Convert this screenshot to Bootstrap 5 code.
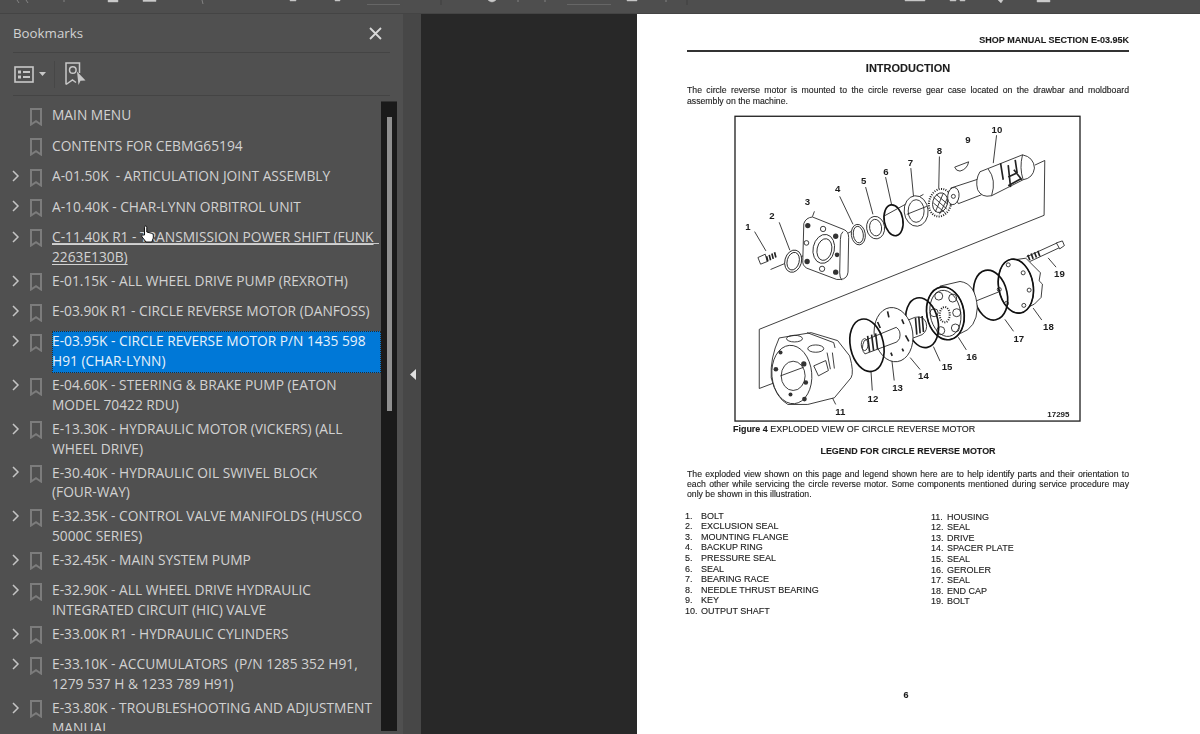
<!DOCTYPE html>
<html lang="en">
<head>
  <meta charset="UTF-8">
  <title>Bookmarks</title>
  <link href="https://cdn.jsdelivr.net/npm/bootstrap@5.3.2/dist/css/bootstrap.min.css" rel="stylesheet">
  <style>
    html, body { height: 734px; overflow: hidden; background: #505050; }
    .top-strip { height: 14px; background: #4e4e4e; border-bottom: 1px solid #444; line-height: 0; }
    .work-area { height: 720px; }
    .side-panel { width: 403px; background: #505050; color: #d2d2d2; font-family: "Open Sans", sans-serif; position: relative; }
    .panel-title { height: 39px; margin: 0 13px; padding-top: 1px; border-bottom: 1px solid #444; font-size: 13.3px; }
    .panel-tools { height: 43px; margin: 0 13px; border-bottom: 1px solid #444; }
    .list-view-ico { margin-left: 1px; }
    .list-caret { margin-left: 5px; }
    .tool-sep { width: 1px; height: 27px; background: #474747; }
    .find-mark-ico { margin-left: 2px; }
    .mark-list { height: 630px; overflow: hidden; margin-top: 5px; }
    .mark-rows { width: 381px; padding-top: 2px; }
    .mark-row { min-height: 30.45px; padding-top: 2.4px; font-size: 13.75px; line-height: 19.6px; }
    .mark-row.two-line { min-height: 43.65px; }
    .mark-chev { width: 30px; height: 19.5px; padding-left: 12px; flex: none; }
    .mark-ico { width: 22px; height: 19.5px; flex: none; }
    .mark-text { flex: 1; }
    .mark-text.is-hover { text-decoration: underline; text-underline-offset: 2px; }
    .hover-first { display: block; height: 17px; margin: 0 2px 2.6px 0; border-bottom: 1px solid #c8c8c8; text-decoration: none; }
    .mark-text.is-active { background: #0078d7; color: #e8f2fb; outline: 1px dotted #2b2b2b; outline-offset: -1px; margin-top: -1px; padding-top: .6px; }
    .scroll-track { width: 16px; height: 630px; background: #1a1a1a; border-top: 1px solid #333; }
    .scroll-thumb { width: 5px; height: 294px; background: #8f8f8f; margin: 15px 0 0 6px; }
    .splitter { width: 18px; background: #474747; padding-left: 1px; }
    .doc-back { width: 216px; background: #282828; }
    .doc-page { flex: 1; background: #fff; color: #1c1c1c; font-family: "Liberation Sans", Arial, sans-serif; padding: 21px 71px 0 50px; font-size: 8.95px; line-height: 10.4px; filter: blur(.35px); -webkit-text-stroke: .12px #1c1c1c; }
    .page-head { font-weight: 700; font-size: 9px; text-align: right; border-bottom: 2px solid #333; padding-bottom: 5px; }
    .page-h1 { font-weight: 700; font-size: 11px; text-align: center; margin: 10px 0 10px; line-height: 13px; }
    .page-just { text-align: justify; margin: 0; font-size: 8.7px; line-height: 10.3px; }
    .page-just.full-line { text-align-last: justify; }
    .fig-wrap { margin: 9px 0 0 47px; line-height: 0; }
    .fig-cap { margin: 2px 0 0 46px; }
    .page-h2 { font-weight: 700; text-align: center; margin: 12px 0 12px; }
    .legend-row { display: grid; grid-template-columns: 16px auto; font-size: 9px; line-height: 10.6px; }
    .legend-cols { margin: 11px 0 0 -2px; }
    .legend-left { width: 246px; }
    .legend-right { margin-top: 1px; }
    .page-no { text-align: center; font-weight: 700; margin: 73px 0 0 -4px; }
    .hand { position: absolute; left: 141px; top: 211px; }
    .diagram text { font-family: "Liberation Sans", Arial, sans-serif; font-weight: 700; font-size: 29px; fill: #1c1c1c; }
    .diagram .ln { fill: none; stroke: #222; stroke-width: 2.6; }
    .diagram .ln2 { fill: none; stroke: #222; stroke-width: 5; }
    .diagram .ln3 { fill: none; stroke: #111; stroke-width: 5; }
    .diagram .fl { fill: #fff; stroke: #222; stroke-width: 2.6; }
    .diagram .teeth { fill: #fff; stroke: #222; stroke-width: 6; stroke-dasharray: 3 4; }
    .diagram .num-small { font-size: 24px; }
  </style>
</head>
<body>
  <svg width="0" height="0" class="position-absolute">
    <symbol id="mk" viewBox="0 0 12 18"><path d="M1 1h10v15.500l-5-3.300-5 3.300z" fill="none" stroke="#7c7c7c" stroke-width="2"/></symbol>
    <symbol id="ch" viewBox="0 0 8 12"><path d="M1 1l5 5-5 5" fill="none" stroke="#c4c4c4" stroke-width="1.500"/></symbol>
  </svg>

  <div class="top-strip">
    <svg width="1200" height="13" viewBox="0 0 1200 13">
      <path d="M17 0l2 3M26 0l2 3M64 0v2M108 0h10v2h-10zM143 0h13v1.500h-13zM202 0l1 4M290 0h6v1h-6zM335 0h5v1h-5zM488 0q4 4 8 0zM518 0v2M545 0v2M627 0h10v1h-10zM666 0v2M905 0h20v1h-20zM950 0h6v1h-6zM960 0h5v1h-5zM998 0h5l-2 3zM1037 0h13v2h-13z" fill="#cfcfcf" stroke="#b8b8b8" stroke-width=".5"/>
      <path d="M367 4.500h33M567 4.500h44" stroke="#666" fill="none"/>
      <path d="M441 0v5M687 0v5" stroke="#3f3f3f" fill="none"/>
    </svg>
  </div>
  <div class="work-area d-flex">
    <aside class="side-panel">
      <div class="panel-title d-flex align-items-center justify-content-between">
        <span>Bookmarks</span>
        <svg width="13" height="13" viewBox="0 0 13 13" class="me-2"><path d="M1 1l11 11M12 1L1 12" stroke="#d8d8d8" stroke-width="1.800"/></svg>
      </div>
      <div class="panel-tools d-flex align-items-center">
        <svg width="20" height="17" viewBox="0 0 20 17" class="list-view-ico"><rect x="1" y="1" width="18" height="15" fill="none" stroke="#c8c8c8" stroke-width="1.600"/><rect x="4" y="4.500" width="3" height="3" fill="#c8c8c8"/><rect x="4" y="9.500" width="3" height="3" fill="#c8c8c8"/><path d="M9 6h7M9 11h7" stroke="#c8c8c8" stroke-width="1.800"/></svg>
        <svg width="7" height="4" viewBox="0 0 7 4" class="list-caret"><path d="M0 0h7L3.500 4z" fill="#c8c8c8"/></svg>
        <span class="tool-sep mx-2"></span>
        <svg width="21" height="24" viewBox="0 0 21 24" class="find-mark-ico"><path d="M1 22.500V1h13.500v10M1 22.500l6.500-4.500 3.500 2.500" fill="none" stroke="#c8c8c8" stroke-width="1.500"/><circle cx="7.800" cy="8" r="3.300" fill="none" stroke="#c8c8c8" stroke-width="1.500"/><path d="M12 9.500l8.500 9-5 .2-2 4.300z" fill="#c8c8c8"/></svg>
      </div>
      <div class="mark-list d-flex">
        <div class="mark-rows" id="rows"></div>
        <div class="scroll-track"><div class="scroll-thumb"></div></div>
      </div>
      <svg class="hand" width="13" height="18" viewBox="0 0 13 18"><path d="M3.500 10V2.200c0-1.600 2.300-1.600 2.300 0V7l4.500 1.200c1.500.4 2 1 2 2.300V13l-1.500 4H5L1 11.800c-.9-1.400.8-2.600 2-1.600z" fill="#fff" stroke="#111" stroke-width="1"/></svg>
    </aside>
    <div class="splitter d-flex align-items-center justify-content-center">
      <svg width="6" height="11" viewBox="0 0 6 11"><path d="M6 0v11L0 5.500z" fill="#e0e0e0"/></svg>
    </div>
    <div class="doc-back"></div>
    <main class="doc-page">
      <div class="page-head">SHOP MANUAL SECTION E-03.95K</div>
      <div class="page-h1">INTRODUCTION</div>
      <p class="page-just full-line">The circle reverse motor is mounted to the circle reverse gear case located on the drawbar and moldboard</p>
      <p class="page-just">assembly on the machine.</p>
      <div class="fig-wrap">
        <svg class="diagram" width="347" height="307" viewBox="160 46 1044 922">
          <rect x="163" y="49" width="1038" height="917" fill="#fff" stroke="#222" stroke-width="4"/>
          <!-- outline round the two groups -->
          <path class="ln" d="M1065 196l30-14-2 165-857 343v178l90-34M270 510l100-42M440 432l100-50M610 350l120-66M880 608l120-48M360 820l60-30"/>
          <path class="ln" d="M222 396l34 58M296 368l32 84M402 335l-6 16M478 290l40 84M556 262l22 82M616 232l18 82M692 205l8 84M778 170l-2 96M950 106l-10 84M1105 475l24 28M1060 626l26 36M975 660l26 36M835 714l24 38M760 742l20 44M690 775l30 36M630 740l12 104M572 814l4 60M450 884l16 32"/>
          <!-- bolt 1 -->
          <path class="fl" d="M232 474l22-10 6 22-20 8z"/><path class="ln2" d="M258 470l4 16M266 466l4 16M274 462l4 16M282 458l4 16"/>
          <!-- seal 2 -->
          <ellipse class="fl" cx="338" cy="485" rx="25" ry="34" transform="rotate(15 338 485)"/><ellipse class="ln" cx="338" cy="485" rx="18" ry="27" transform="rotate(15 338 485)"/>
          <!-- flange 3 -->
          <path class="fl" d="M370 372q6-18 26-20l95 38q14 6 14 24l-2 104q-2 20-22 22h-12l-90-34q-14-8-12-24z"/>
          <path class="ln" d="M488 396q-8 6-8 24l-2 100q0 14 6 22"/>
          <ellipse class="ln" cx="430" cy="448" rx="32" ry="44" transform="rotate(12 430 448)"/><ellipse class="ln" cx="432" cy="450" rx="22" ry="33" transform="rotate(12 432 450)"/>
          <g fill="#333"><circle cx="382" cy="378" r="8"/><circle cx="466" cy="410" r="8"/><circle cx="380" cy="486" r="8"/><circle cx="466" cy="518" r="8"/><circle cx="470" cy="466" r="7"/></g>
          <circle class="ln" cx="428" cy="388" r="8"/><circle class="ln" cx="425" cy="508" r="8"/><circle class="ln" cx="378" cy="430" r="7"/>
          <!-- rings 4 5 6 -->
          <ellipse class="fl" cx="534" cy="405" rx="21" ry="31" transform="rotate(-8 534 405)"/><ellipse class="ln" cx="534" cy="405" rx="15" ry="25" transform="rotate(-8 534 405)"/>
          <ellipse class="fl" cx="586" cy="384" rx="27" ry="34" transform="rotate(-8 586 384)"/><ellipse class="ln" cx="586" cy="384" rx="18" ry="25" transform="rotate(-8 586 384)"/>
          <ellipse class="ln3" cx="640" cy="362" rx="28" ry="47" transform="rotate(-10 640 362)"/>
          <!-- race 7 -->
          <ellipse class="fl" cx="708" cy="334" rx="36" ry="46" transform="rotate(-5 708 334)"/><ellipse class="ln" cx="708" cy="334" rx="24" ry="34"/><path class="ln" d="M680 344l60-24"/>
          <!-- bearing 8 -->
          <ellipse class="teeth" cx="780" cy="309" rx="33" ry="42" transform="rotate(15 780 309)"/><ellipse class="ln" cx="780" cy="309" rx="22" ry="30" transform="rotate(15 780 309)"/><path class="ln" d="M760 292l40 36M760 310l36 30M768 284l36 30M790 280l-24 56M802 296l-24 48"/>
          <!-- key 9 -->
          <path class="fl" d="M824 202l42-16q-4 22-26 28q-12 0-16-12z"/>
          <!-- shaft 10 -->
          <path class="fl" d="M812 265L895 238 905 285 835 312z"/><ellipse class="fl" cx="820" cy="289" rx="17" ry="26" transform="rotate(8 820 289)"/><circle class="ln" cx="820" cy="290" r="6"/>
          <path class="fl" d="M900 216L1028 165Q1062 172 1064 205 1060 235 1030 240L935 288Q905 295 893 270 885 240 900 216z"/>
          <path class="ln" d="M925 208q25 32 10 80M1028 165q-10 40 2 75"/>
          <path class="ln2" d="M962 190l8 50M985 196l7 66M1002 210l24 30M985 232l26-12M985 258l40-22M1006 180l6 40"/>
          <!-- bolt 19 -->
          <path class="ln" d="M1040 472l92-42M1050 486l90-42"/><path class="fl" d="M1130 430l18-6 6 14-14 10z"/><path class="ln2" d="M1044 466l6 16M1054 462l6 16M1064 458l6 16M1074 454l6 16"/>
          <!-- cap 18 -->
          <path class="fl" d="M1010 480l28-4 44 44-4 24 10 10-4 40-20 20-40 20-24-4z"/>
          <ellipse class="fl" cx="1008" cy="560" rx="52" ry="82" transform="rotate(-10 1008 560)"/>
          <ellipse class="ln3" cx="1008" cy="560" rx="52" ry="82" transform="rotate(-10 1008 560)"/>
          <g class="ln"><circle cx="985" cy="496" r="6"/><circle cx="1030" cy="520" r="6"/><circle cx="958" cy="570" r="6"/><circle cx="1048" cy="572" r="6"/><circle cx="980" cy="612" r="6"/><circle cx="1032" cy="618" r="6"/></g>
          <!-- seal 17 -->
          <ellipse class="ln3" cx="932" cy="587" rx="50" ry="76" transform="rotate(-12 932 587)"/>
          <!-- geroler 16 -->
          <path class="fl" d="M780 560l60-14q48 6 52 80q-2 60-50 76l-40-2z"/>
          <ellipse class="fl" cx="796" cy="642" rx="56" ry="80" transform="rotate(-10 796 642)"/>
          <ellipse class="ln3" cx="796" cy="642" rx="56" ry="80" transform="rotate(-10 796 642)"/>
          <ellipse class="ln" cx="796" cy="642" rx="46" ry="70" transform="rotate(-10 796 642)"/>
          <g class="ln"><circle cx="776" cy="590" r="12"/><circle cx="818" cy="596" r="12"/><circle cx="762" cy="640" r="12"/><circle cx="830" cy="640" r="12"/><circle cx="782" cy="694" r="12"/><circle cx="826" cy="686" r="12"/></g>
          <ellipse class="teeth" cx="794" cy="646" rx="15" ry="23"/>
          <!-- seal 15 -->
          <ellipse class="ln3" cx="726" cy="670" rx="48" ry="76" transform="rotate(-12 726 670)"/>
          <!-- drive spline -->
          <path class="fl" d="M660 672l44-18q26-6 34 16q6 24-12 36l-64 24z"/>
          <path class="ln2" d="M706 656l4 50M716 652l4 50M726 650l4 48"/>
          <!-- plate 14 -->
          <ellipse class="fl" cx="640" cy="706" rx="58" ry="82" transform="rotate(-8 640 706)"/>
          <g class="ln2"><path d="M592 668l8 18M622 636l4 18M665 660l6 14M676 708l10 18M632 760l4 10M666 748l4 8"/></g>
          <!-- shaft 13 -->
          <path class="fl" d="M552 724l96-40q16 10 10 34l-8 10-96 36q-14-14-2-40z"/><path class="ln2" d="M562 710l6 48M574 706l6 48M586 702l6 48"/>
          <ellipse class="ln" cx="553" cy="736" rx="10" ry="18"/>
          <!-- seal 12 -->
          <ellipse class="ln3" cx="560" cy="738" rx="50" ry="80" transform="rotate(-12 560 738)"/>
          <!-- housing 11 -->
          <path class="fl" d="M296 716l96-16 80 24 36 46q14 50 4 66l-50 60-80 20h-60q-36-20-50-80q-4-60 24-120z"/>
          <ellipse class="fl" cx="334" cy="826" rx="60" ry="88" transform="rotate(-5 334 826)"/>
          <ellipse class="ln" cx="338" cy="830" rx="36" ry="44"/>
          <g fill="#333"><circle cx="286" cy="810" r="7"/><circle cx="376" cy="850" r="7"/><circle cx="330" cy="886" r="6"/><circle cx="372" cy="900" r="7"/><circle cx="300" cy="760" r="6"/><circle cx="370" cy="794" r="8"/></g>
          <ellipse class="ln" cx="342" cy="718" rx="24" ry="10"/><ellipse class="ln" cx="406" cy="748" rx="24" ry="11"/>
          <path class="ln" d="M400 800l36-16 8 30-30 16zM380 700l80 30 4 16M440 760l10 50M456 760l6 48M300 830l70-26"/>
          <!-- callouts -->
          <g text-anchor="middle">
            <text x="202" y="392">1</text><text x="274" y="358">2</text><text x="381" y="316">3</text><text x="472" y="276">4</text><text x="550" y="252">5</text><text x="617" y="226">6</text><text x="691" y="198">7</text><text x="778" y="162">8</text><text x="864" y="129">9</text><text x="951" y="98">10</text>
            <text x="1139" y="532">19</text><text x="1106" y="692">18</text><text x="1017" y="728">17</text><text x="875" y="781">16</text><text x="801" y="811">15</text><text x="730" y="839">14</text><text x="652" y="877">13</text><text x="578" y="908">12</text><text x="480" y="948">11</text>
            <text x="1136" y="955" class="num-small">17295</text>
          </g>
        </svg>
      </div>
      <div class="fig-cap"><b>Figure 4</b> EXPLODED VIEW OF CIRCLE REVERSE MOTOR</div>
      <div class="page-h2">LEGEND FOR CIRCLE REVERSE MOTOR</div>
      <p class="page-just">The exploded view shown on this page and legend shown here are to help identify parts and their orientation to each other while servicing the circle reverse motor. Some components mentioned during service procedure may only be shown in this illustration.</p>
      <div class="legend-cols d-flex">
        <div class="legend-left" id="legL"></div>
        <div class="legend-right" id="legR"></div>
      </div>
      <div class="page-no">6</div>
    </main>
  </div>

  <script src="https://cdn.jsdelivr.net/npm/bootstrap@5.3.2/dist/js/bootstrap.bundle.min.js"></script>
  <script>
    const marks = [
      ["MAIN MENU", 0], ["CONTENTS FOR CEBMG65194", 0],
      ["A-01.50K \u00a0- ARTICULATION JOINT ASSEMBLY", 1], ["A-10.40K - CHAR-LYNN ORBITROL UNIT", 1],
      ['<span class="hover-first">C-11.40K R1 - TRANSMISSION POWER SHIFT (FUNK</span>2263E130B)', 1, "is-hover", true],
      ["E-01.15K - ALL WHEEL DRIVE PUMP (REXROTH)", 1], ["E-03.90K R1 - CIRCLE REVERSE MOTOR (DANFOSS)", 1],
      ["E-03.95K - CIRCLE REVERSE MOTOR P/N 1435 598<br>H91 (CHAR-LYNN)", 1, "is-active"],
      ["E-04.60K - STEERING &amp; BRAKE PUMP (EATON<br>MODEL 70422 RDU)", 1],
      ["E-13.30K - HYDRAULIC MOTOR (VICKERS) (ALL<br>WHEEL DRIVE)", 1],
      ["E-30.40K - HYDRAULIC OIL SWIVEL BLOCK<br>(FOUR-WAY)", 1],
      ["E-32.35K - CONTROL VALVE MANIFOLDS (HUSCO<br>5000C SERIES)", 1],
      ["E-32.45K - MAIN SYSTEM PUMP", 1],
      ["E-32.90K - ALL WHEEL DRIVE HYDRAULIC<br>INTEGRATED CIRCUIT (HIC) VALVE", 1],
      ["E-33.00K R1 - HYDRAULIC CYLINDERS", 1],
      ["E-33.10K - ACCUMULATORS \u00a0(P/N 1285 352 H91,<br>1279 537 H &amp; 1233 789 H91)", 1],
      ["E-33.80K - TROUBLESHOOTING AND ADJUSTMENT<br>MANUAL", 1]
    ];
    document.getElementById("rows").innerHTML = marks.map(m => {
      const two = m[0].includes("<br>") || m[3] ? " two-line" : "";
      const chev = m[1] ? '<svg width="8" height="12"><use href="#ch"/></svg>' : "";
      return `<div class="mark-row d-flex${two}">
        <span class="mark-chev d-flex align-items-center">${chev}</span>
        <span class="mark-ico"><svg width="12" height="18"><use href="#mk"/></svg></span>
        <span class="mark-text ${m[2] || ""}">${m[0]}</span></div>`;
    }).join("");

    const fill = (id, names, start) => {
      document.getElementById(id).innerHTML = names.map((n, i) =>
        `<div class="legend-row"><span>${start + i}.</span><span>${n}</span></div>`).join("");
    };
    fill("legL", ["BOLT", "EXCLUSION SEAL", "MOUNTING FLANGE", "BACKUP RING", "PRESSURE SEAL", "SEAL", "BEARING RACE", "NEEDLE THRUST BEARING", "KEY", "OUTPUT SHAFT"], 1);
    fill("legR", ["HOUSING", "SEAL", "DRIVE", "SPACER PLATE", "SEAL", "GEROLER", "SEAL", "END CAP", "BOLT"], 11);
  </script>
</body>
</html>
